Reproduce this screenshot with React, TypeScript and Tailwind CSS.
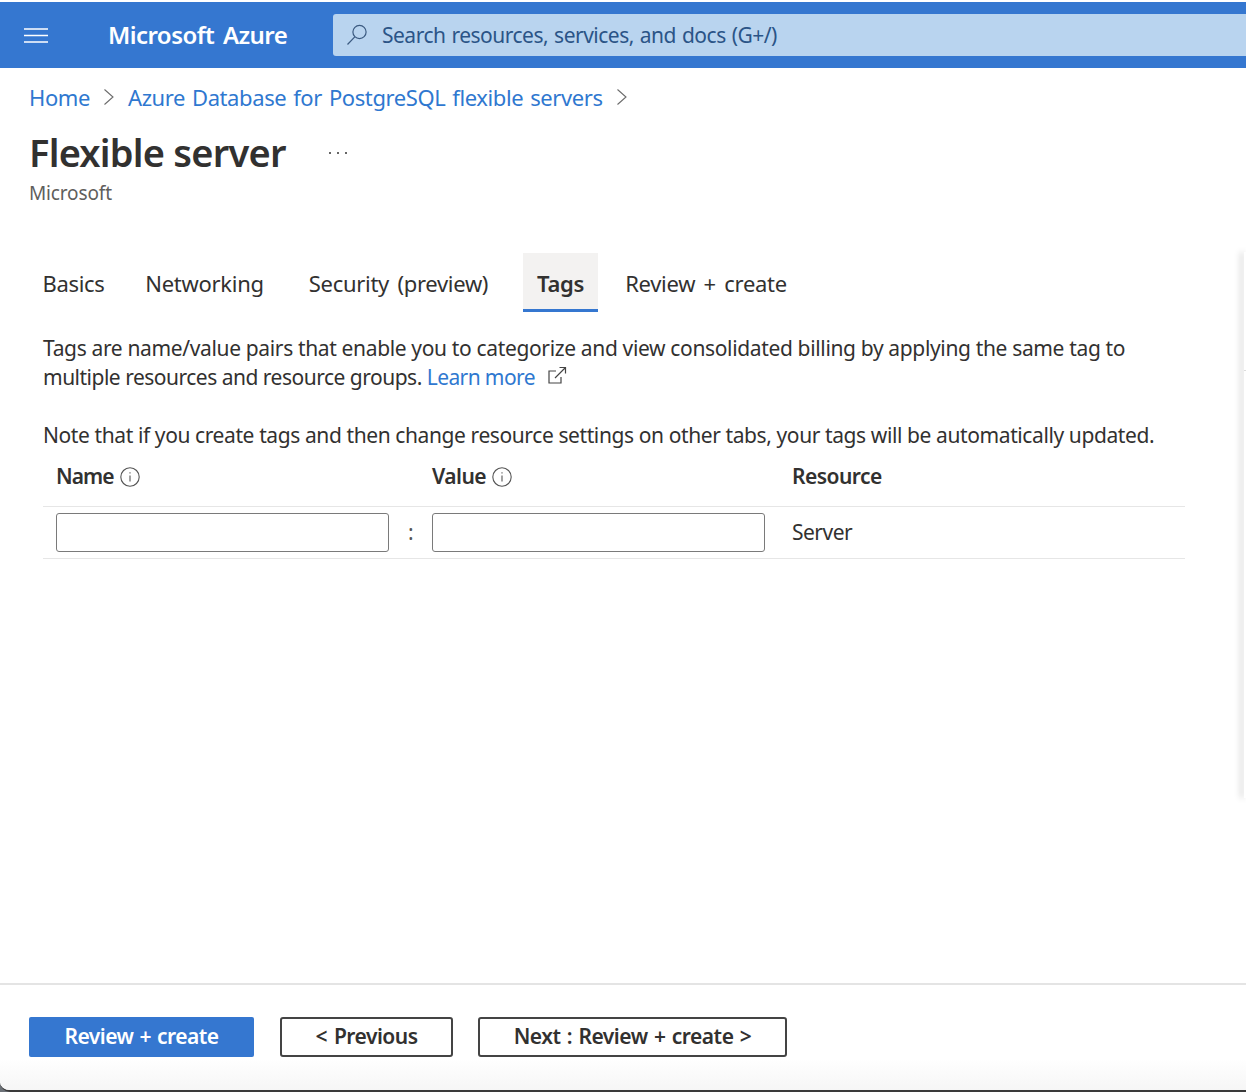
const FONT = "font-['Noto_Sans',sans-serif]";

function Chevron() {
  return (
    <svg width="12" height="20" viewBox="0 0 12 20" fill="none" stroke="#6b6b6b" strokeWidth="1.1" className="shrink-0">
      <path d="M1.5 2.5 L10 10 L1.5 17.5" />
    </svg>
  );
}

function InfoIcon() {
  return (
    <svg width="20" height="20" viewBox="0 0 20 20" fill="none" stroke="#555" strokeWidth="1.1" className="shrink-0">
      <circle cx="10" cy="10" r="9.2" />
      <path d="M10 8.6 V14.5" />
      <path d="M10 5.2 V6.6" />
    </svg>
  );
}

function Tab({ label, active, className }: { label: string; active?: boolean; className: string }) {
  return (
    <div
      className={`flex h-[59px] items-center justify-center ${className} ${
        active ? 'border-b-[3px] border-[#3577d0] bg-[#f3f2f1] pt-[5px] font-semibold' : 'pt-[2px]'
      }`}
    >
      {label}
    </div>
  );
}

export default function App() {
  return (
    <div className={`relative flex h-[1092px] w-[1246px] flex-col overflow-hidden bg-[#6d7278] ${FONT} text-[#323130]`}>
      <div className="flex h-full flex-col overflow-hidden rounded-bl-[10px] border-b-2 border-[#3a3a3a] bg-white">
        <header className="mt-[2px] flex h-[66px] shrink-0 items-center bg-[#3577d0] text-white">
          <div className="flex w-[72px] justify-center">
            <svg width="24" height="15" viewBox="0 0 24 15" fill="none" stroke="#fff" strokeWidth="1.3">
              <path d="M0 1 H24 M0 7.5 H24 M0 14 H24" />
            </svg>
          </div>
          <div className="w-[261px] pl-[36px] text-[24px] font-semibold tracking-[-0.55px] [word-spacing:3px]">Microsoft Azure</div>
          <div className="flex h-[42px] flex-1 items-center rounded-l-[3px] bg-[#b9d4ef] pl-[12px] text-[21px] tracking-[-0.5px] text-[#2b5487] [word-spacing:1px]">
            <svg width="24" height="24" viewBox="0 0 24 24" fill="none" stroke="#3b5a80" strokeWidth="1.2" className="mr-[13px] shrink-0">
              <circle cx="14.5" cy="9" r="6.6" />
              <path d="M9.8 13.8 L2.5 21.5" />
            </svg>
            <span className="pt-[2px]">Search resources, services, and docs (G+/)</span>
          </div>
        </header>

        <nav className="mt-[13px] flex h-[32px] items-center pl-[29px] text-[22px] tracking-[-0.4px] text-[#2f78d0] [word-spacing:1.6px]">
          <span>Home</span>
          <span className="mx-[13px] flex"><Chevron /></span>
          <span>Azure Database for PostgreSQL flexible servers</span>
          <span className="ml-[13px] flex"><Chevron /></span>
        </nav>

        <div className="mt-[16px] flex h-[46px] items-center pl-[29px]">
          <h1 className="text-[38px] font-semibold tracking-[-0.78px]">Flexible server</h1>
          <span className="ml-[43px] mt-[2px] flex gap-[6px]">
            <i className="h-[2px] w-[2px] rounded-full bg-[#333]" />
            <i className="h-[2px] w-[2px] rounded-full bg-[#333]" />
            <i className="h-[2px] w-[2px] rounded-full bg-[#333]" />
          </span>
        </div>
        <div className="mt-[4px] pl-[29px] text-[19px] leading-[28px] tracking-[-0.15px] text-[#605e5c]">Microsoft</div>

        <div className="mt-[46px] flex pl-[43px] text-[22px] tracking-[-0.3px] [word-spacing:3px]">
          <Tab label="Basics" className="w-[61px]" />
          <Tab label="Networking" className="ml-[41px] w-[119px]" />
          <Tab label="Security (preview)" className="ml-[44px] w-[181px]" />
          <Tab label="Tags" active className="ml-[34px] w-[75px]" />
          <Tab label="Review + create" className="ml-[27px] w-[162px]" />
        </div>

        <div className="ml-[43px] mt-[22px] w-[1142px] text-[21px] leading-[29px]">
          <p className="tracking-[-0.35px]">
            Tags are name/value pairs that enable you to categorize and view consolidated billing by applying the same tag to
          </p>
          <p className="tracking-[-0.5px]">
            multiple resources and resource groups.{' '}
            <span className="tracking-[-0.6px] text-[#2f78d0]">Learn more</span>
            <svg width="20" height="20" viewBox="0 0 20 20" fill="none" stroke="#444" strokeWidth="1.2" className="ml-[12px] inline-block align-[-1px]">
              <path d="M9 5 H2 V17 H14 V11" />
              <path d="M8 12 L18.5 1.5 M12.5 1.5 H18.5 V7.5" />
            </svg>
          </p>
          <p className="mt-[29px] tracking-[-0.4px]">Note that if you create tags and then change resource settings on other tabs, your tags will be automatically updated.</p>

          <div className="mt-[1px] flex h-[56px] items-center border-b border-[#e6e6e6] pb-[4px] pl-[13px] font-semibold tracking-[-0.55px]">
            <div className="flex w-[376px] items-center gap-[6px]"><span className="tracking-[-0.95px]">Name</span> <InfoIcon /></div>
            <div className="flex w-[360px] items-center gap-[6px]">Value <InfoIcon /></div>
            <div>Resource</div>
          </div>
          <div className="flex h-[52px] items-center border-b border-[#e6e6e6] pl-[13px] tracking-[-0.5px]">
            <input className="h-[39px] w-[333px] rounded-[3px] border-[1.5px] border-[#7a7a7a] bg-white" />
            <div className="w-[43px] text-center text-[#555]">:</div>
            <input className="h-[39px] w-[333px] rounded-[3px] border-[1.5px] border-[#7a7a7a] bg-white" />
            <div className="ml-[27px]">Server</div>
          </div>
        </div>

        <div className="flex-1" />

        <footer className="flex h-[107px] shrink-0 items-center border-t-2 border-[#e4e4e4] bg-gradient-to-b from-white from-70% to-[#f6f6f6] pb-[1px] pl-[29px] text-[21px] font-semibold tracking-[-0.5px]">
          <button className="h-[40px] w-[225px] rounded-[2px] bg-[#3577d0] text-white [word-spacing:1px]">Review + create</button>
          <button className="ml-[26px] h-[40px] w-[173px] rounded-[3px] border-2 border-[#444] bg-white [word-spacing:2px]">&lt; Previous</button>
          <button className="ml-[25px] h-[40px] w-[309px] rounded-[3px] border-2 border-[#444] bg-white [word-spacing:1.4px]">Next : Review + create &gt;</button>
        </footer>
      </div>

      {/* edge of the side panel peeking in from the right */}
      <div className="absolute right-0 top-[252px] h-[546px] w-[2px] bg-white shadow-[-3px_0_6px_rgba(0,0,0,0.28)]">
        <div className="mt-[118px] h-px bg-[#dcdcdc]" />
      </div>
    </div>
  );
}
